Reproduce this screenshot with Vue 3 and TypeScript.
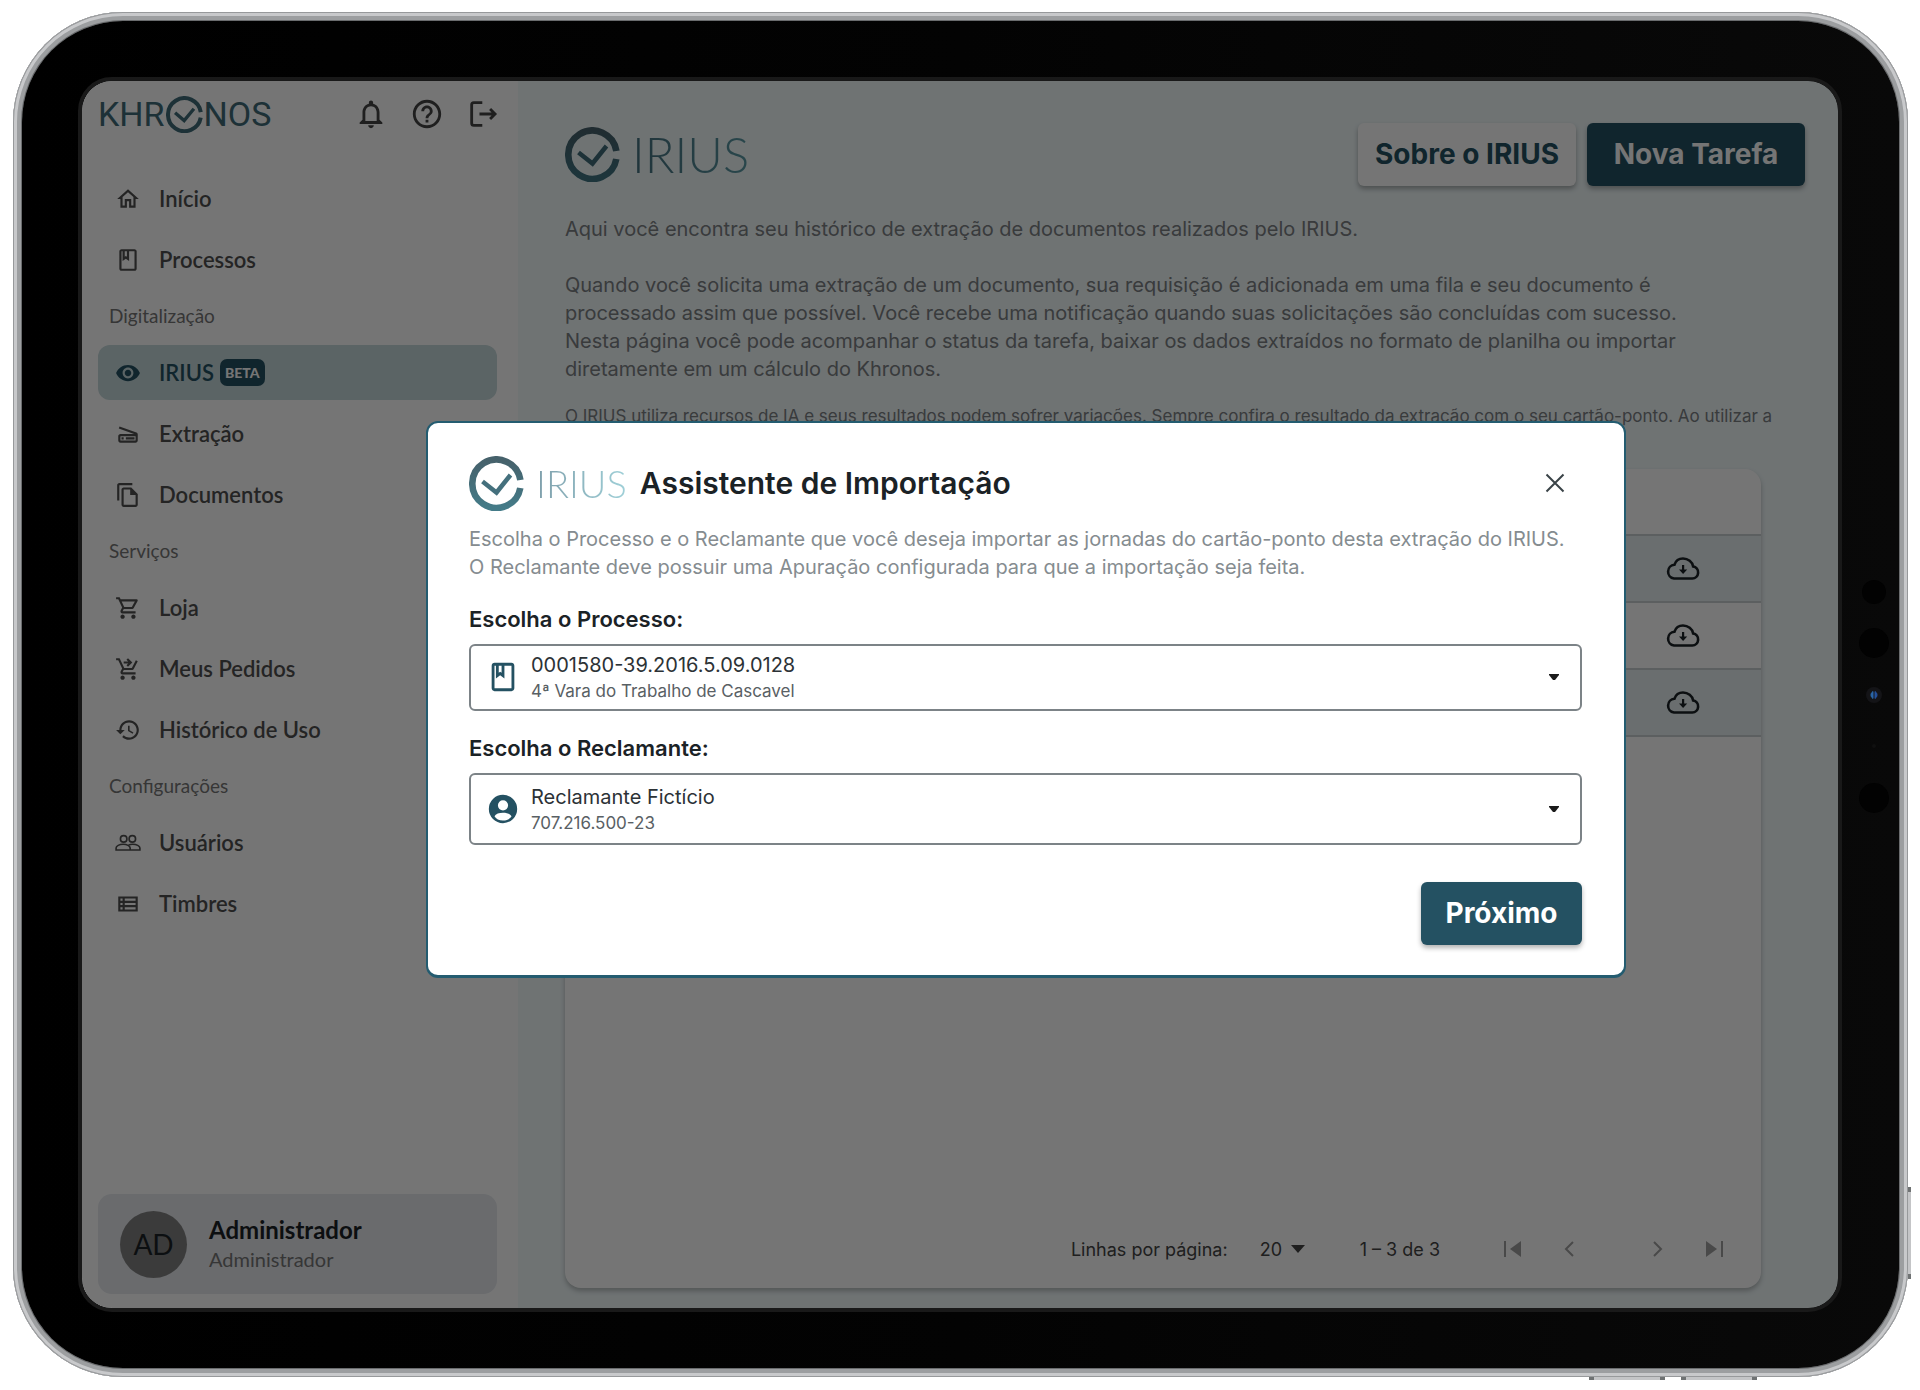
<script setup lang="ts">
import { ref } from 'vue'

interface NavItem {
  label: string
  icon: string
  active?: boolean
  badge?: string
}
interface NavGroup {
  title?: string
  items: NavItem[]
}

const icons: Record<string, string> = {
  home: 'M12 5.69l5 4.5V18h-2v-6H9v6H7v-7.81l5-4.5M12 3L2 12h3v8h6v-6h2v6h6v-8h3L12 3z',
  book: 'M18 2H6c-1.1 0-2 .9-2 2v16c0 1.1.9 2 2 2h12c1.1 0 2-.9 2-2V4c0-1.1-.9-2-2-2zM9 4h2v5l-1-.75L9 9V4zm9 16H6V4h1v9l3-2.25L13 13V4h5v16z',
  eye: 'M12 4.5C7 4.5 2.73 7.61 1 12c1.73 4.39 6 7.5 11 7.5s9.27-3.11 11-7.5c-1.73-4.39-6-7.5-11-7.5zM12 17c-2.76 0-5-2.24-5-5s2.24-5 5-5 5 2.24 5 5-2.24 5-5 5zm0-8c-1.66 0-3 1.34-3 3s1.34 3 3 3 3-1.34 3-3-1.34-3-3-3z',
  scanner: 'M19.8 10.7L4.2 5l-.7 1.9L17.6 12H5c-1.1 0-2 .9-2 2v4c0 1.1.9 2 2 2h14c1.1 0 2-.9 2-2v-5.5c0-.8-.5-1.6-1.2-1.8zM19 18H5v-4h14v4zM6 15h2v2H6zm4 0h8v2h-8z',
  copy: 'M16 1H4c-1.1 0-2 .9-2 2v14h2V3h12V1zM15 5H8c-1.1 0-2 .9-2 2v14c0 1.1.9 2 2 2h11c1.1 0 2-.9 2-2V11l-6-6zM8 21V7h6v5h5v9H8z',
  cart: 'M15.55 13c.75 0 1.41-.41 1.75-1.03l3.58-6.49c.37-.66-.11-1.48-.87-1.48H5.21l-.94-2H1v2h2l3.6 7.59-1.35 2.44C4.52 15.37 5.48 17 7 17h12v-2H7l1.1-2h7.45zM6.16 6h12.15l-2.76 5H8.53L6.16 6zM7 18c-1.1 0-1.99.9-1.99 2S5.9 22 7 22s2-.9 2-2-.9-2-2-2zm10 0c-1.1 0-1.99.9-1.99 2s.89 2 1.99 2 2-.9 2-2-.9-2-2-2z',
  checkout: 'M7 18c-1.1 0-1.99.9-1.99 2S5.9 22 7 22s2-.9 2-2-.9-2-2-2zm10 0c-1.1 0-1.99.9-1.99 2s.89 2 1.99 2 2-.9 2-2-.9-2-2-2zm-8.9-5h7.45c.75 0 1.41-.41 1.75-1.03L21 4.96 19.25 4l-3.7 7H8.53L4.27 2H1v2h2l3.6 7.59-1.35 2.44C4.52 15.37 5.48 17 7 17h12v-2H7l1.1-2zM12 2l4 4-4 4-1.41-1.41L12.17 7H8V5h4.17l-1.59-1.59L12 2z',
  history: 'M13 3c-4.97 0-9 4.03-9 9H1l3.89 3.89.07.14L9 12H6c0-3.87 3.13-7 7-7s7 3.13 7 7-3.13 7-7 7c-1.93 0-3.68-.79-4.94-2.06l-1.42 1.42C8.27 19.99 10.51 21 13 21c4.97 0 9-4.03 9-9s-4.03-9-9-9zm-1 5v5l4.28 2.54.72-1.21-3.5-2.08V8H12z',
  rows: 'M3 5v14h18V5H3zm4 2v2H5V7h2zm-2 6v-2h2v2H5zm0 2h2v2H5v-2zm14 2H9v-2h10v2zm0-4H9v-2h10v2zm0-4H9V7h10v2z',
  bell: 'M12 22c1.1 0 2-.9 2-2h-4c0 1.1.9 2 2 2zm6-6v-5c0-3.07-1.63-5.64-4.5-6.32V4c0-.83-.67-1.5-1.5-1.5s-1.5.67-1.5 1.5v.68C7.64 5.36 6 7.92 6 11v5l-2 2v1h16v-1l-2-2zm-2 1H8v-6c0-2.48 1.51-4.5 4-4.5s4 2.02 4 4.5v6z',
  help: 'M11 18h2v-2h-2v2zm1-16C6.48 2 2 6.48 2 12s4.48 10 10 10 10-4.48 10-10S17.52 2 12 2zm0 18c-4.41 0-8-3.59-8-8s3.59-8 8-8 8 3.59 8 8-3.59 8-8 8zm0-14c-2.21 0-4 1.79-4 4h2c0-1.1.9-2 2-2s2 .9 2 2c0 2-3 1.75-3 5h2c0-2.25 3-2.5 3-5 0-2.21-1.79-4-4-4z',
}

const groups: NavGroup[] = [
  { items: [{ label: 'Início', icon: 'home' }, { label: 'Processos', icon: 'book' }] },
  {
    title: 'Digitalização',
    items: [
      { label: 'IRIUS', icon: 'eye', active: true, badge: 'BETA' },
      { label: 'Extração', icon: 'scanner' },
      { label: 'Documentos', icon: 'copy' },
    ],
  },
  {
    title: 'Serviços',
    items: [
      { label: 'Loja', icon: 'cart' },
      { label: 'Meus Pedidos', icon: 'checkout' },
      { label: 'Histórico de Uso', icon: 'history' },
    ],
  },
  {
    title: 'Configurações',
    items: [{ label: 'Usuários', icon: 'users' }, { label: 'Timbres', icon: 'rows' }],
  },
]

const rows = [1, 2, 3]
const processo = ref('0001580-39.2016.5.09.0128')
const reclamante = ref('Reclamante Fictício')
const pageSize = ref('20')
</script>

<template>
  <div class="page">
    <div class="device">
      <i class="key key-side"></i>
      <i class="key key-bottom key-down"></i>
      <i class="key key-bottom key-up"></i>
      <div class="bezel">
        <svg class="sensors" viewBox="0 0 36 240" aria-hidden="true">
          <circle cx="18" cy="17" r="12" fill="#020202" />
          <circle cx="18" cy="68" r="15" fill="#020202" />
          <circle cx="18" cy="120" r="8" fill="#141417" />
          <path d="M17 116.500a4 4 0 0 0 0 7z" fill="#2a66a8" stroke="#2a66a8" />
          <path d="M19 116.500a4 4 0 0 1 0 7z" fill="#2552a0" stroke="#24509a" />
          <circle cx="18" cy="171" r="2" fill="#101010" />
          <circle cx="18" cy="223" r="15" fill="#020202" />
        </svg>
        <div class="screen">
          <aside class="sidebar">
            <header class="brand">
              <div class="khronos" role="img" aria-label="Khronos">
                <span>KHR</span>
                <svg viewBox="0 0 55 55" width="37" height="37">
                  <path d="M51.700 24A24.500 24.500 0 1 0 51.600 32" fill="none" stroke="#3f6c79" stroke-width="6" />
                  <path d="M13.500 25L27 36.500 41.500 19" fill="none" stroke="#3f6c79" stroke-width="5" />
                </svg>
                <span>NOS</span>
              </div>
              <div class="tools">
                <button type="button" aria-label="Notificações">
                  <svg viewBox="0 0 24 24"><path :d="icons.bell" /></svg>
                </button>
                <button type="button" aria-label="Ajuda">
                  <svg viewBox="0 0 24 24"><path :d="icons.help" /></svg>
                </button>
                <button type="button" aria-label="Sair">
                  <svg viewBox="0 0 24 24" class="line">
                    <path d="M11.500 4H5.500C4.700 4 4 4.700 4 5.500v13c0 .8.7 1.500 1.500 1.500h6M9.500 12H20M17 8.500l3.500 3.500L17 15.500" />
                  </svg>
                </button>
              </div>
            </header>

            <nav class="nav">
              <template v-for="(group, g) in groups" :key="g">
                <h2 v-if="group.title" class="group">{{ group.title }}</h2>
                <a v-for="item in group.items" :key="item.label" href="#" class="item" :class="{ active: item.active }">
                  <svg v-if="item.icon === 'users'" viewBox="0 0 24 24" class="line thin">
                    <circle cx="8" cy="8.200" r="3" />
                    <circle cx="16" cy="8.200" r="3" />
                    <path d="M1 18.500v-1.800c0-2 3-3.500 6.500-3.500s6.500 1.500 6.500 3.500v1.800zM12.500 14c1-.5 2.300-.8 3.800-.8 3.600 0 6.700 1.500 6.700 3.500v1.800h-9" />
                  </svg>
                  <svg v-else viewBox="0 0 24 24"><path :d="icons[item.icon]" /></svg>
                  <span>{{ item.label }}</span>
                  <b v-if="item.badge" class="badge">{{ item.badge }}</b>
                </a>
              </template>
            </nav>

            <div class="user">
              <div class="avatar">AD</div>
              <div>
                <div class="user-name">Administrador</div>
                <div class="user-role">Administrador</div>
              </div>
            </div>
          </aside>

          <main class="main">
            <header class="top">
              <div class="irius" role="img" aria-label="IRIUS">
                <svg viewBox="0 0 55 55" width="55" height="55">
                  <defs>
                    <linearGradient id="ring-a" x1="0" y1="0" x2="0" y2="1">
                      <stop offset="0" stop-color="#46616b" />
                      <stop offset="1" stop-color="#3f7482" />
                    </linearGradient>
                  </defs>
                  <path d="M51.400 24A24.200 24.200 0 1 0 51.300 32" fill="none" stroke="url(#ring-a)" stroke-width="6.600" />
                  <path d="M13.500 25.500L27.500 36.500 41.500 19" fill="none" stroke="#3f6c79" stroke-width="4.500" />
                </svg>
                <span class="wordmark large">IRIUS</span>
              </div>
              <div class="actions">
                <button type="button" class="btn light">Sobre o IRIUS</button>
                <button type="button" class="btn">Nova Tarefa</button>
              </div>
            </header>

            <div class="intro">
              <p>Aqui você encontra seu histórico de extração de documentos realizados pelo IRIUS.</p>
              <p>
                Quando você solicita uma extração de um documento, sua requisição é adicionada em uma fila e seu documento é<br />
                processado assim que possível. Você recebe uma notificação quando suas solicitações são concluídas com sucesso.<br />
                Nesta página você pode acompanhar o status da tarefa, baixar os dados extraídos no formato de planilha ou importar<br />
                diretamente em um cálculo do Khronos.
              </p>
              <p class="notice">
                O IRIUS utiliza recursos de IA e seus resultados podem sofrer variações. Sempre confira o resultado da extração com o seu cartão-ponto. Ao utilizar a
              </p>
            </div>

            <section class="card">
              <table class="table">
                <thead>
                  <tr><th></th><th class="action"></th></tr>
                </thead>
                <tbody>
                  <tr v-for="row in rows" :key="row">
                    <td></td>
                    <td class="action">
                      <button type="button" aria-label="Baixar">
                        <svg viewBox="0 0 34 24" width="34" height="24">
                          <path class="cloud" d="M8 21.500H26.300a6.100 6.100 0 0 0 .8-12.100C26.500 5 22 1.500 17 1.500c-4.300 0-7.400 2.700-8.600 6.300A6.900 6.900 0 0 0 8 21.500z" />
                          <path d="M16 8h2.200v4.500h3L17.100 17 13 12.500h3z" />
                        </svg>
                      </button>
                    </td>
                  </tr>
                </tbody>
              </table>
              <footer class="pager">
                <label for="page-size">Linhas por página:</label>
                <div class="size">
                  <select id="page-size" v-model="pageSize">
                    <option>20</option>
                  </select>
                  <svg viewBox="0 0 14 8" width="14" height="8"><path d="M0 0h14L7 8z" /></svg>
                </div>
                <span class="range">1 – 3 de 3</span>
                <div class="steps">
                  <button type="button" aria-label="Primeira página" disabled>
                    <svg viewBox="0 0 18 18"><path d="M0 1h2v16H0zM17 1v16L6 9z" /></svg>
                  </button>
                  <button type="button" aria-label="Página anterior" disabled>
                    <svg viewBox="0 0 18 18" class="line"><path d="M13 2L6 9l7 7" /></svg>
                  </button>
                  <button type="button" class="next" aria-label="Próxima página" disabled>
                    <svg viewBox="0 0 18 18" class="line"><path d="M5 2l7 7-7 7" /></svg>
                  </button>
                  <button type="button" aria-label="Última página" disabled>
                    <svg viewBox="0 0 18 18"><path d="M16 1h2v16h-2zM1 1v16l11-8z" /></svg>
                  </button>
                </div>
              </footer>
            </section>
          </main>

          <div class="backdrop">
            <section class="dialog" role="dialog" aria-labelledby="dialog-title">
              <header class="dialog-head">
                <div class="irius" role="img" aria-label="IRIUS">
                  <svg viewBox="0 0 55 55" width="55" height="55">
                    <defs>
                      <linearGradient id="ring-b" x1="0" y1="0" x2="0" y2="1">
                        <stop offset="0" stop-color="#46616b" />
                        <stop offset="1" stop-color="#447b88" />
                      </linearGradient>
                    </defs>
                    <path d="M51.400 24A24.200 24.200 0 1 0 51.300 32" fill="none" stroke="url(#ring-b)" stroke-width="6.600" />
                    <path d="M13.500 25.500L27.500 36.500 41.500 19" fill="none" stroke="#44707d" stroke-width="4.500" />
                  </svg>
                  <span class="wordmark">IRIUS</span>
                </div>
                <h1 id="dialog-title">Assistente de Importação</h1>
                <button type="button" class="close" aria-label="Fechar">
                  <svg viewBox="0 0 20 20" width="20" height="20" class="line"><path d="M1.500 1.500l17 17M18.500 1.500l-17 17" /></svg>
                </button>
              </header>
              <p class="lead">
                Escolha o Processo e o Reclamante que você deseja importar as jornadas do cartão-ponto desta extração do IRIUS.<br />
                O Reclamante deve possuir uma Apuração configurada para que a importação seja feita.
              </p>

              <label class="field-label" for="processo">Escolha o Processo:</label>
              <div class="field">
                <svg viewBox="0 0 24 24" width="34" height="34"><path :d="icons.book" /></svg>
                <div class="value">
                  <select id="processo" v-model="processo">
                    <option>0001580-39.2016.5.09.0128</option>
                  </select>
                  <small>4ª Vara do Trabalho de Cascavel</small>
                </div>
                <svg class="caret" viewBox="0 0 10 6" width="10" height="6"><path d="M0 0h10v1L6 6H4L0 1z" /></svg>
              </div>

              <label class="field-label" for="reclamante">Escolha o Reclamante:</label>
              <div class="field tall">
                <svg viewBox="0 0 24 24" width="34" height="34">
                  <path fill-rule="evenodd" d="M12 2a10 10 0 1 0 0 20 10 10 0 0 0 0-20zm0 3.800a3.600 3.600 0 1 1 0 7.200 3.600 3.600 0 0 1 0-7.200zM6 17.200c.8-1.700 3.300-2.500 6-2.500s5.200.8 6 2.500c-1 1.900-3.300 3-6 3s-5-1.100-6-3z" />
                </svg>
                <div class="value">
                  <select id="reclamante" v-model="reclamante">
                    <option>Reclamante Fictício</option>
                  </select>
                  <small>707.216.500-23</small>
                </div>
                <svg class="caret" viewBox="0 0 10 6" width="10" height="6"><path d="M0 0h10v1L6 6H4L0 1z" /></svg>
              </div>

              <footer class="dialog-foot">
                <button type="button" class="btn">Próximo</button>
              </footer>
            </section>
          </div>
        </div>
      </div>
    </div>
  </div>
</template>

<style>
body {
  margin: 0;
  background: #fff;
}
</style>

<style scoped>
* {
  box-sizing: border-box;
}
.page {
  display: flex;
  min-height: 100vh;
  padding: 12px 12px 13px 13px;
  font-family: Inter, sans-serif;
  color: #1b2226;
}
h1,
h2,
p {
  margin: 0;
  font-weight: 400;
}
button {
  padding: 0;
  border: 0;
  background: none;
  font: inherit;
  color: inherit;
}
svg {
  display: block;
  fill: currentColor;
  flex: none;
}
.line {
  fill: none;
  stroke: currentColor;
  stroke-width: 2;
}
.thin {
  stroke-width: 1.5;
}
select {
  appearance: none;
  border: 0;
  padding: 0;
  background: none;
  font: inherit;
  color: inherit;
}

/* tablet frame */
.device {
  position: relative;
  flex: 1;
  display: flex;
  padding: 9px;
  border-radius: 110px;
  background: #a7a9ab;
  box-shadow: inset 0 0 0 1px #97999b, inset 0 0 0 4px #c8c9cb, inset 0 0 0 8px #9c9ea0, inset 0 0 0 9px #6a6c6e;
}
.bezel {
  position: relative;
  flex: 1;
  display: flex;
  padding: 60px 61px 60px 60px;
  border-radius: 101px;
  background: linear-gradient(90deg, #000, #030303 50%, #090909);
}
.key {
  position: absolute;
  background: #c4c5c7;
  border: solid #6f7273;
}
.key-side {
  right: -3px;
  bottom: 98px;
  width: 3px;
  height: 92px;
  border-width: 5px 0;
}
.key-bottom {
  bottom: -3px;
  width: 76px;
  height: 3px;
  border-width: 0 5px;
}
.key-down {
  right: 243px;
}
.key-up {
  right: 151px;
}
.sensors {
  position: absolute;
  top: 50%;
  right: 7px;
  width: 36px;
  height: 240px;
  margin-top: -120px;
}
.screen {
  position: relative;
  flex: 1;
  display: flex;
  overflow: hidden;
  border-radius: 30px;
  background: #f1fafb;
  outline: 4px solid #191919;
}

/* sidebar */
.sidebar {
  flex: none;
  display: flex;
  flex-direction: column;
  width: 436px;
  padding: 11px 21px 14px 16px;
  background: #fff;
  font-family: Lato, sans-serif;
}
.brand {
  display: flex;
  align-items: center;
  justify-content: space-between;
  height: 44px;
  margin-bottom: 35px;
}
.khronos {
  display: flex;
  align-items: center;
  gap: 1px;
  font-family: Roboto, sans-serif;
  font-size: 34px;
  line-height: 42px;
  color: #3f6c79;
}
.tools {
  display: flex;
  gap: 22px;
  margin-right: -3px;
  color: #444;
}
.tools svg {
  width: 34px;
  height: 34px;
}
.nav {
  display: flex;
  flex-direction: column;
  gap: 6px;
}
.group {
  height: 46px;
  padding-left: 11px;
  font-size: 19px;
  line-height: 46px;
  color: #777;
}
.item {
  display: flex;
  align-items: center;
  height: 55px;
  padding-left: 17px;
  border-radius: 12px;
  font-size: 22px;
  font-weight: 600;
  color: #505050;
  text-decoration: none;
}
.item svg {
  width: 26px;
  height: 26px;
  margin-right: 18px;
}
.item.active {
  background: #c6d9dc;
  color: #245162;
}
.badge {
  margin-left: 6px;
  padding: 0 5px;
  border-radius: 7px;
  background: #245162;
  font-size: 14px;
  line-height: 27px;
  color: #fff;
}
.user {
  display: flex;
  align-items: center;
  gap: 22px;
  height: 100px;
  margin-top: auto;
  padding: 0 22px;
  border-radius: 14px;
  background: #e6e9ee;
}
.avatar {
  width: 67px;
  border-radius: 50%;
  background: #828282;
  font-size: 28px;
  line-height: 67px;
  text-align: center;
}
.user-name {
  font-size: 24px;
  font-weight: 700;
  line-height: 30px;
}
.user-role {
  font-size: 20px;
  line-height: 28px;
  color: #777;
}

/* page */
.main {
  flex: 1;
  display: flex;
  flex-direction: column;
  min-width: 0;
  padding: 41px 33px 20px 47px;
}
.top {
  display: flex;
  align-items: center;
  justify-content: space-between;
  height: 64px;
}
.irius {
  display: flex;
  align-items: center;
  gap: 12px;
}
.wordmark {
  font-family: Lato, sans-serif;
  font-size: 38px;
  font-weight: 300;
  line-height: 48px;
  color: transparent;
  background: linear-gradient(90deg, #7f9fab, #9fd0d8);
  background-clip: text;
}
.wordmark.large {
  font-size: 49px;
  background-image: linear-gradient(90deg, #46717f, #5a9aa5);
}
.actions {
  display: flex;
  gap: 11px;
}
.btn {
  min-width: 161px;
  height: 63px;
  padding: 0 20px;
  border-radius: 6px;
  background: #245162;
  box-shadow: 0 3px 5px rgba(0, 0, 0, 0.3);
  font-size: 28px;
  font-weight: 700;
  line-height: 36px;
  color: #fff;
}
.actions .btn {
  width: 218px;
  padding: 0;
}
.btn.light {
  background: #fff;
  color: #245162;
}
.intro {
  padding-top: 29px;
  font-size: 20px;
  line-height: 28px;
  color: #7c8084;
  white-space: nowrap;
}
.intro p + p {
  margin-top: 28px;
}
.intro p.notice {
  margin-top: 21px;
  font-size: 17px;
  line-height: 24px;
}
.card {
  flex: 1;
  display: flex;
  flex-direction: column;
  justify-content: space-between;
  margin: 41px 44px 0 0;
  border-radius: 16px;
  background: #fff;
  box-shadow: 0 3px 5px rgba(0, 0, 0, 0.25);
}
.table {
  width: 100%;
  border-collapse: collapse;
}
.table th {
  height: 66px;
}
.table td {
  height: 67px;
}
.table th,
.table td {
  padding: 0;
  border-bottom: 2px solid #c9cfd1;
}
.table tbody tr:nth-child(odd) {
  background: #e6f0f1;
}
.action {
  width: 156px;
}
.action button {
  display: block;
  margin: 0 auto;
}
.cloud {
  fill: none;
  stroke: currentColor;
  stroke-width: 2.6;
}
.pager {
  display: flex;
  align-items: center;
  justify-content: flex-end;
  height: 78px;
  padding-right: 38px;
  font-size: 18px;
  color: #444;
}
.size {
  display: flex;
  align-items: center;
  gap: 8px;
  margin: 0 55px 0 32px;
}
.steps {
  display: flex;
  gap: 38px;
  margin-left: 64px;
  color: #a0a0a0;
}
.steps svg {
  width: 18px;
  height: 18px;
}
.steps .next {
  margin-left: 33px;
}

/* import dialog */
.backdrop {
  position: absolute;
  inset: 0;
  display: flex;
  align-items: center;
  justify-content: center;
  padding: 9px 0 0 132px;
  background: rgba(0, 0, 0, 0.54);
}
.dialog {
  width: 1200px;
  padding: 33px 42px 30px 41px;
  border: 2px solid #245c70;
  border-bottom-width: 3px;
  border-radius: 12px;
  background: #fff;
}
.dialog-head {
  display: flex;
  align-items: center;
  height: 55px;
}
.dialog-head h1 {
  margin-left: 13px;
  font-size: 30px;
  font-weight: 600;
}
.close {
  margin-left: auto;
  margin-right: 17px;
  color: #3a4347;
}
.lead {
  margin: 14px 0 22px;
  font-size: 20px;
  line-height: 28px;
  color: #858c90;
  white-space: nowrap;
}
.field-label {
  display: block;
  font-size: 22px;
  font-weight: 600;
  line-height: 32px;
}
.field {
  display: flex;
  align-items: center;
  height: 67px;
  margin: 9px 0 21px;
  padding: 0 21px 0 15px;
  border: 2px solid #7c8387;
  border-radius: 6px;
  color: #245162;
}
.field.tall {
  height: 72px;
  margin-bottom: 37px;
}
.value {
  flex: 1;
  display: flex;
  flex-direction: column;
  margin-left: 11px;
  padding-top: 2px;
}
.value select {
  font-size: 20px;
  line-height: 26px;
  color: #2c3236;
}
.value small {
  font-size: 17px;
  line-height: 26px;
  color: #596064;
}
.caret {
  color: #1b1b1b;
}
.dialog-foot {
  display: flex;
  justify-content: flex-end;
}
</style>
